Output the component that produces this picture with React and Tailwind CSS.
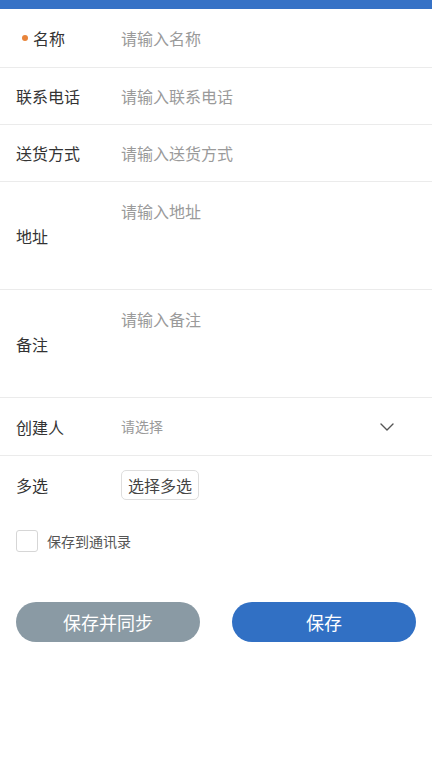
import { ChevronDown } from "lucide-react";

const font = { fontFamily: '"Noto Sans CJK SC", "Noto Sans", sans-serif' };

function Row({ label, required, children, className = "h-[56px]" }) {
  return (
    <div className={`flex items-center border-b border-[#ebebeb] px-4 ${className}`}>
      <div className="w-[105px] shrink-0 flex items-center text-[16px] text-[#333]">
        {required && <span className="w-[6px] h-[6px] rounded-full bg-[#e8843a] ml-[6px] mr-[5px]" />}
        {label}
      </div>
      <div className="flex-1 min-w-0 h-full">{children}</div>
    </div>
  );
}

function TextInput({ placeholder }) {
  return (
    <input
      type="text"
      placeholder={placeholder}
      className="w-full h-full bg-transparent text-[16px] text-[#333] placeholder:text-[#9a9a9a] outline-none"
    />
  );
}

function TextArea({ placeholder }) {
  return (
    <textarea
      placeholder={placeholder}
      className="w-full h-full pt-[17px] bg-transparent resize-none text-[16px] leading-[24px] text-[#333] placeholder:text-[#9a9a9a] outline-none"
    />
  );
}

export default function App() {
  return (
    <div className="min-h-[768px] bg-white" style={font}>
      <div className="h-[9px] bg-[#3672c6]" />
      <Row label="名称" required className="h-[59px]">
        <TextInput placeholder="请输入名称" />
      </Row>
      <Row label="联系电话" className="h-[57px]">
        <TextInput placeholder="请输入联系电话" />
      </Row>
      <Row label="送货方式" className="h-[57px]">
        <TextInput placeholder="请输入送货方式" />
      </Row>
      <Row label="地址" className="h-[108px]">
        <TextArea placeholder="请输入地址" />
      </Row>
      <Row label="备注" className="h-[108px]">
        <TextArea placeholder="请输入备注" />
      </Row>
      <Row label="创建人" className="h-[58px]">
        <div className="flex items-center h-full pr-[17px]">
          <span className="flex-1 text-[14px] text-[#9a9a9a]">请选择</span>
          <ChevronDown className="w-6 h-6 text-[#555]" strokeWidth={1.4} />
        </div>
      </Row>
      <div className="flex items-center h-[57px] px-4">
        <div className="w-[105px] shrink-0 text-[16px] text-[#333]">多选</div>
        <button className="h-[30px] px-[6px] border border-[#dedede] rounded-[5px] text-[16px] text-[#444] bg-white">
          选择多选
        </button>
      </div>
      <label className="flex items-center gap-[9px] px-4 mt-[17px]">
        <span className="w-[22px] h-[22px] border border-[#d6d6d6] rounded-[3px] bg-white" />
        <span className="text-[14px] text-[#555]">保存到通讯录</span>
      </label>
      <div className="flex justify-between px-4 mt-[50px]">
        <button className="w-[184px] h-[40px] rounded-full bg-[#8a9aa4] text-white text-[18px]">保存并同步</button>
        <button className="w-[184px] h-[40px] rounded-full bg-[#3170c4] text-white text-[18px]">保存</button>
      </div>
    </div>
  );
}
